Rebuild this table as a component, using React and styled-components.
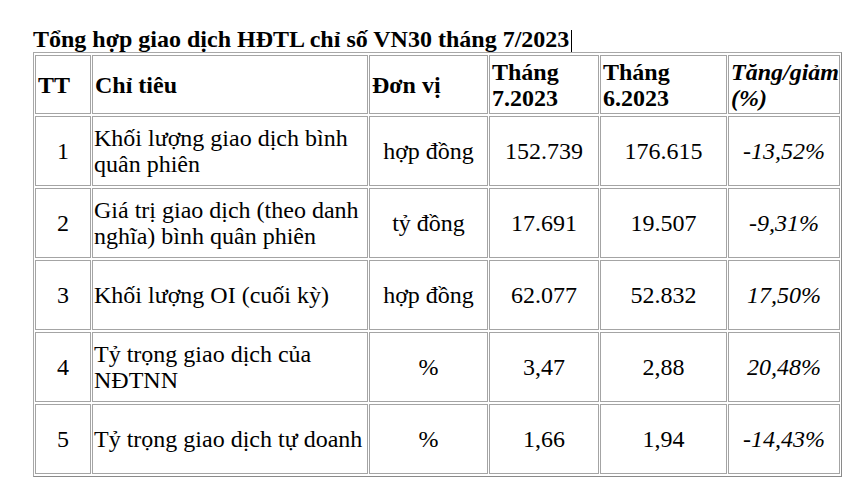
import React from 'react'
import styled, { createGlobalStyle } from 'styled-components'

const GlobalStyle = createGlobalStyle`
  html, body {
    margin: 0;
    padding: 0;
    background: #ffffff;
  }
  body {
    font-family: "Liberation Serif", "Times New Roman", serif;
    color: #000000;
  }
`

const Page = styled.div`
  padding: 26px 0 0 33px;
`

const Title = styled.h1`
  margin: 0;
  font-size: 24px;
  line-height: 26px;
  font-weight: bold;
  white-space: nowrap;
`

const Caret = styled.span`
  display: inline-block;
  width: 0;
  height: 22px;
  margin-left: 2px;
  border-left: 1px solid #000000;
  vertical-align: -5px;
`

const Table = styled.table`
  table-layout: fixed;
  width: 809px;
  border-collapse: separate;
  border-spacing: 1px 2px;
  border: 1px solid;
  border-color: #a8a8a8 #8a8a8a #8a8a8a #a8a8a8;
  font-size: 24px;
  line-height: 26px;
  color: #000000;
`

const HeadRow = styled.tr`
  height: 59px;
`

const BodyRow = styled.tr`
  height: 70px;
`

const Cell = styled.td`
  box-sizing: border-box;
  border: 1px solid #a4a4a4;
  padding: 1px;
  font-family: "Liberation Serif", serif !important;
  font-size: 24px;
  line-height: 26px;
  vertical-align: middle;
  text-align: ${(p) => (p.$left ? 'left' : 'center')};
  font-style: ${(p) => (p.$italic ? 'italic' : 'normal')};
`

const HeadCell = styled.th`
  box-sizing: border-box;
  border: 1px solid #a4a4a4;
  padding: 1px 1px 1px 2px;
  font-family: "Liberation Serif", serif !important;
  font-size: 24px;
  line-height: 26px;
  vertical-align: middle;
  text-align: left;
  font-weight: bold;
  white-space: nowrap;
  font-style: ${(p) => (p.$italic ? 'italic' : 'normal')};
`

const columns = [56, 276, 119, 110, 127, 112]

const rows = [
  ['1', 'Khối lượng giao dịch bình quân phiên', 'hợp đồng', '152.739', '176.615', '-13,52%'],
  ['2', 'Giá trị giao dịch (theo danh nghĩa) bình quân phiên', 'tỷ đồng', '17.691', '19.507', '-9,31%'],
  ['3', 'Khối lượng OI (cuối kỳ)', 'hợp đồng', '62.077', '52.832', '17,50%'],
  ['4', 'Tỷ trọng giao dịch của NĐTNN', '%', '3,47', '2,88', '20,48%'],
  ['5', 'Tỷ trọng giao dịch tự doanh', '%', '1,66', '1,94', '-14,43%'],
]

export default function App() {
  return (
    <>
      <GlobalStyle />
      <Page>
        <Title>
          Tổng hợp giao dịch HĐTL chỉ số VN30 tháng 7/2023
          <Caret />
        </Title>
        <Table>
          <colgroup>
            {columns.map((w, i) => (
              <col key={i} style={{ width: w }} />
            ))}
          </colgroup>
          <thead>
            <HeadRow>
              <HeadCell>TT</HeadCell>
              <HeadCell>Chỉ tiêu</HeadCell>
              <HeadCell>Đơn vị</HeadCell>
              <HeadCell>
                Tháng
                <br />
                7.2023
              </HeadCell>
              <HeadCell>
                Tháng
                <br />
                6.2023
              </HeadCell>
              <HeadCell $italic>
                Tăng/giảm
                <br />
                (%)
              </HeadCell>
            </HeadRow>
          </thead>
          <tbody>
            {rows.map((r) => (
              <BodyRow key={r[0]}>
                <Cell>{r[0]}</Cell>
                <Cell $left>{r[1]}</Cell>
                <Cell>{r[2]}</Cell>
                <Cell>{r[3]}</Cell>
                <Cell>{r[4]}</Cell>
                <Cell $italic>{r[5]}</Cell>
              </BodyRow>
            ))}
          </tbody>
        </Table>
      </Page>
    </>
  )
}
